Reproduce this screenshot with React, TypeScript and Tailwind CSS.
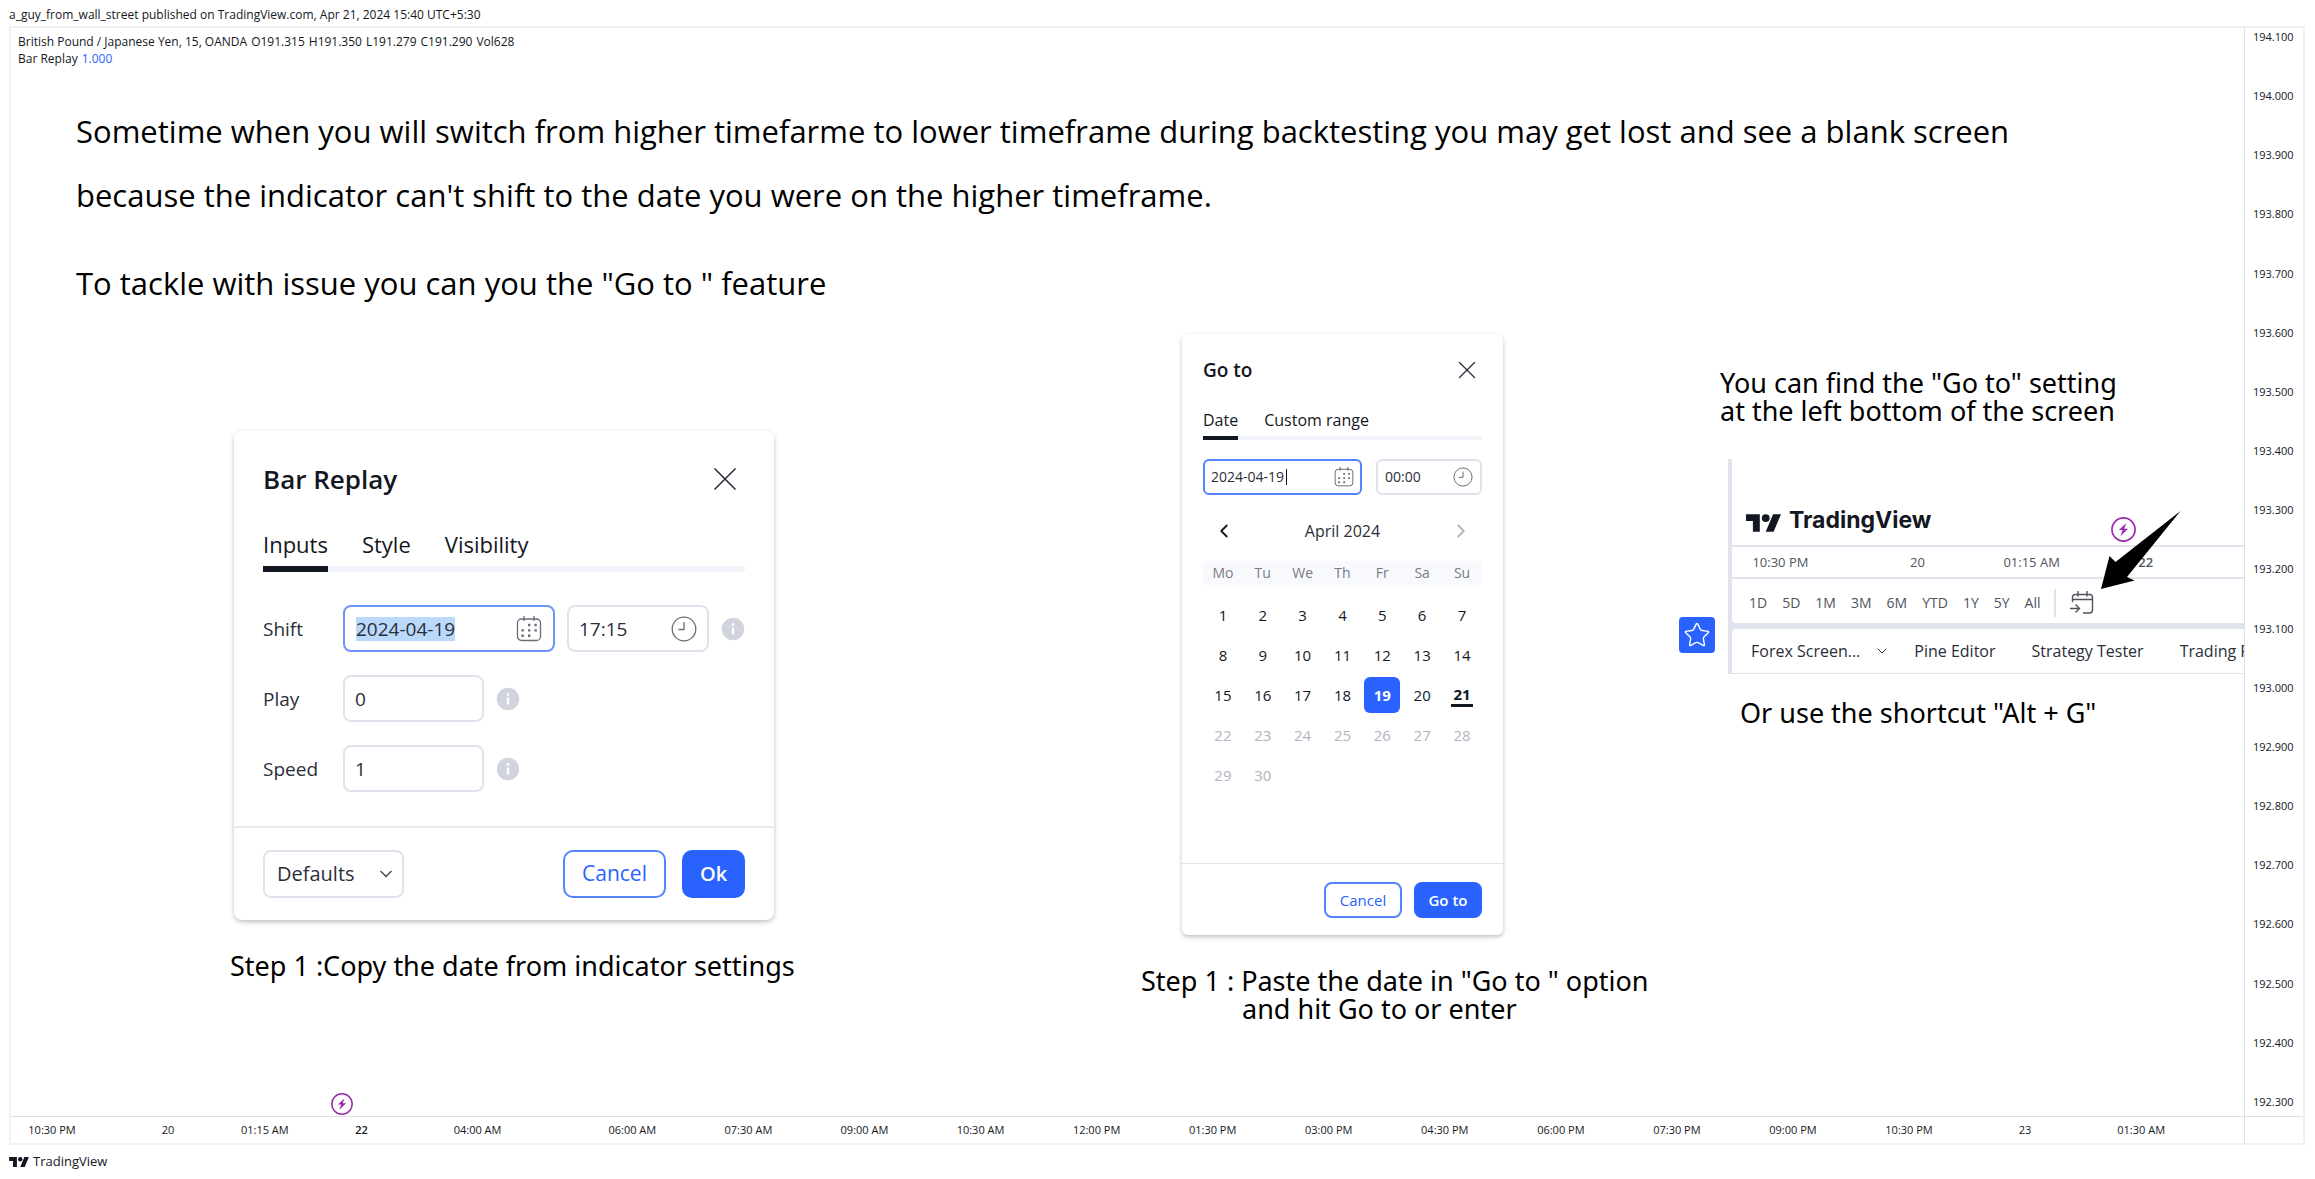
import React from "react";
import { ChevronDown, ChevronLeft, ChevronRight, Star, X } from "lucide-react";

const PRICES = [
  "194.100", "194.000", "193.900", "193.800", "193.700", "193.600", "193.500",
  "193.400", "193.300", "193.200", "193.100", "193.000", "192.900", "192.800",
  "192.700", "192.600", "192.500", "192.400", "192.300",
];

// bars = distance from the previous tick
type Tick = { label: string; bars: number; bold?: boolean };

const TICKS: Tick[] = [
  { label: "10:30 PM", bars: 2.12 },
  { label: "20", bars: 6 },
  { label: "01:15 AM", bars: 5 },
  { label: "22", bars: 5, bold: true },
  { label: "04:00 AM", bars: 6 },
  { label: "06:00 AM", bars: 8 },
  { label: "07:30 AM", bars: 6 },
  { label: "09:00 AM", bars: 6 },
  { label: "10:30 AM", bars: 6 },
  { label: "12:00 PM", bars: 6 },
  { label: "01:30 PM", bars: 6 },
  { label: "03:00 PM", bars: 6 },
  { label: "04:30 PM", bars: 6 },
  { label: "06:00 PM", bars: 6 },
  { label: "07:30 PM", bars: 6 },
  { label: "09:00 PM", bars: 6 },
  { label: "10:30 PM", bars: 6 },
  { label: "23", bars: 6 },
  { label: "01:30 AM", bars: 6 },
];

const MINI_TICKS: Tick[] = [
  { label: "10:30 PM", bars: 2.12 },
  { label: "20", bars: 6 },
  { label: "01:15 AM", bars: 5 },
  { label: "22", bars: 5, bold: true },
];

const WEEKDAYS = ["Mo", "Tu", "We", "Th", "Fr", "Sa", "Su"];
const WEEKS = [
  [1, 2, 3, 4, 5, 6, 7],
  [8, 9, 10, 11, 12, 13, 14],
  [15, 16, 17, 18, 19, 20, 21],
  [22, 23, 24, 25, 26, 27, 28],
  [29, 30],
];
const SELECTED = 19;
const TODAY = 21;

const RANGES = ["1D", "5D", "1M", "3M", "6M", "YTD", "1Y", "5Y", "All"];

const Gap = ({ bars }: { bars: number }) => <span className="basis-0" style={{ flexGrow: bars }} />;

const TimeTicks = ({ ticks, rest }: { ticks: Tick[]; rest: number }) => (
  <>
    {ticks.map((tick, i) => (
      <React.Fragment key={i}>
        <Gap bars={tick.bars} />
        <span className={`flex w-0 justify-center whitespace-nowrap ${tick.bold ? "font-semibold" : ""}`}>
          {tick.label}
        </span>
      </React.Fragment>
    ))}
    <Gap bars={rest} />
  </>
);

const LogoMark = ({ className }: { className: string }) => (
  <svg viewBox="0 4 35.5 18" className={className} fill="#131722" aria-hidden="true">
    <path d="M14 22H7V11H0V4h14v18ZM28 22h-8l7.5-18h8L28 22Z" />
    <circle cx="20" cy="8" r="4" />
  </svg>
);

const BoltIcon = ({ className }: { className: string }) => (
  <svg viewBox="0 0 21 21" className={className} aria-hidden="true">
    <circle cx="10.5" cy="10.5" r="9.7" fill="#fff" stroke="#9c27b0" strokeWidth="1.4" />
    <path d="M12.8 5.2 6.6 11h3.2l-1.9 4.9 6.5-6h-3.3Z" fill="#9c27b0" />
  </svg>
);

const CalendarIcon = ({ className }: { className: string }) => (
  <svg viewBox="0 0 26 26" className={className} fill="none" stroke="#6a6d78" strokeWidth="1.3" aria-hidden="true">
    <rect x="1.5" y="3" width="23" height="21.5" rx="4" />
    <path d="M8 0v5M18 0v5" />
    <path
      d="M12 9h2.4M18.4 9h2.4M5.4 14.4h2.4M12 14.4h2.4M18.4 14.4h2.4M5.4 19.8h2.4M12 19.8h2.4"
      strokeWidth="2.4"
    />
  </svg>
);

const ClockIcon = ({ className }: { className: string }) => (
  <svg viewBox="0 0 26 26" className={className} fill="none" stroke="#6a6d78" strokeWidth="1.3" aria-hidden="true">
    <circle cx="13" cy="13" r="11.8" />
    <path d="M13 6v7.5H7.5" />
  </svg>
);

const InfoIcon = () => (
  <svg viewBox="0 0 24 24" className="ml-3 size-6 shrink-0" aria-hidden="true">
    <circle cx="12" cy="12" r="11.2" fill="#d1d4dc" />
    <path d="M12 10.5v7M12 6.3v2.4" stroke="#fff" strokeWidth="2.4" />
  </svg>
);

const GoToIcon = () => (
  <svg viewBox="0 0 24 24" className="size-6" fill="none" stroke="#50535e" strokeWidth="1.4" aria-hidden="true">
    <path d="M2.5 11V6.5a3 3 0 0 1 3-3h14a3 3 0 0 1 3 3V19a3 3 0 0 1-3 3H13M2.5 8.5h20M8 0v5.5M17 0v5.5" />
    <path d="M0 17.5h9M5.5 13.5l4 4-4 4" />
  </svg>
);

const BarReplayDialog = () => (
  <section className="w-[540px] rounded-lg bg-white text-[#131722] shadow-[0_2px_5px_rgba(0,0,0,0.25)]">
    <div className="px-[29px] pt-6 pb-[34px]">
      <div className="flex h-12 items-center justify-between">
        <h2 className="text-[26px] font-semibold">Bar Replay</h2>
        <button type="button" aria-label="Close">
          <X className="size-10 text-[#2a2e39]" strokeWidth={1} />
        </button>
      </div>
      <div className="mt-[27px] flex gap-[34px] text-[22px] leading-7 font-medium">
        <button type="button" className="-mb-1.5 border-b-6 border-[#131722] pb-2">Inputs</button>
        <button type="button" className="pb-2">Style</button>
        <button type="button" className="pb-2">Visibility</button>
      </div>
      <div className="-z-10 h-1.5 rounded-full bg-[#f0f3fa]" />
      <div className="mt-[33px] flex flex-col gap-[23px] text-[19px] text-[#2a2e39]">
        <div className="flex items-center">
          <label htmlFor="shift" className="w-20">Shift</label>
          <div className="flex h-[47px] w-[212px] items-center justify-between rounded-lg border-2 border-[#6d93ff] px-[11px]">
            <input id="shift" readOnly value="2024-04-19" className="h-6 w-[99px] bg-[#bbd9fb] outline-none" />
            <CalendarIcon className="size-[26px]" />
          </div>
          <div className="ml-3 flex h-[47px] w-[142px] items-center justify-between rounded-lg border-2 border-[#e0e3eb] px-2.5">
            <input aria-label="Shift time" readOnly value="17:15" className="w-16 outline-none" />
            <ClockIcon className="size-[26px]" />
          </div>
          <InfoIcon />
        </div>
        <div className="flex items-center">
          <label htmlFor="play" className="w-20">Play</label>
          <input id="play" readOnly value="0" className="h-[47px] w-[141px] rounded-lg border-2 border-[#e0e3eb] px-2.5 outline-none" />
          <InfoIcon />
        </div>
        <div className="flex items-center">
          <label htmlFor="speed" className="w-20">Speed</label>
          <input id="speed" readOnly value="1" className="h-[47px] w-[141px] rounded-lg border-2 border-[#e0e3eb] px-2.5 outline-none" />
          <InfoIcon />
        </div>
      </div>
    </div>
    <div className="flex items-center border-t-2 border-[#e8eaf0] px-[29px] py-[22px] text-xl">
      <div className="relative">
        <select aria-label="Defaults" className="h-12 w-[141px] appearance-none rounded-lg border-2 border-[#e0e3eb] pl-3 text-[#2a2e39] outline-none">
          <option>Defaults</option>
        </select>
        <ChevronDown className="pointer-events-none absolute top-3.5 right-2 size-5 text-[#50535e]" strokeWidth={2} />
      </div>
      <button type="button" className="ml-auto h-12 w-[103px] rounded-[10px] border-2 border-[#5383ff] text-[21px] font-medium text-[#2962ff]">
        Cancel
      </button>
      <button type="button" className="ml-4 h-12 w-[63px] rounded-[10px] bg-[#2962ff] font-semibold text-white">Ok</button>
    </div>
  </section>
);

const dayClass = (day?: number) => {
  if (day === SELECTED) return "rounded-md bg-[#2962ff] font-bold text-white";
  if (day && day > TODAY) return "text-[#b2b5be]";
  return day === TODAY ? "font-bold" : "";
};

const GoToDialog = () => (
  <section className="w-[321px] rounded-md bg-white text-[15px] text-[#131722] shadow-[0_2px_4px_rgba(0,0,0,0.25)]">
    <div className="px-[21px] pt-4 pb-[68px]">
      <div className="flex h-10 items-center justify-between">
        <h2 className="text-[19px] font-semibold">Go to</h2>
        <button type="button" aria-label="Close">
          <X className="size-[30px] text-[#2a2e39]" strokeWidth={1} />
        </button>
      </div>
      <div className="mt-[18px] flex gap-[26px] text-base font-medium">
        <button type="button" className="-mb-1 border-b-4 border-[#131722] pb-1">Date</button>
        <button type="button" className="pb-1">Custom range</button>
      </div>
      <div className="-z-10 h-1 rounded-full bg-[#f0f3fa]" />
      <div className="mt-[19px] flex justify-between text-sm text-[#2a2e39]">
        <div className="flex h-9 w-[159px] items-center rounded-md border-2 border-[#5383ff] px-1.5">
          <input aria-label="Date" readOnly value="2024-04-19" className="w-[75px] outline-none" />
          <span className="h-4 w-px bg-[#131722]" />
          <CalendarIcon className="ml-auto size-5" />
        </div>
        <div className="flex h-9 w-[106px] items-center justify-between rounded-md border-2 border-[#e0e3eb] px-[7px]">
          <input aria-label="Time" readOnly value="00:00" className="w-12 outline-none" />
          <ClockIcon className="size-5" />
        </div>
      </div>
      <div className="mt-5 flex h-8 items-center justify-between px-2.5">
        <button type="button" aria-label="Previous month">
          <ChevronLeft className="size-[22px] text-[#131722]" strokeWidth={2} />
        </button>
        <span className="text-base text-[#2a2e39]">April 2024</span>
        <button type="button" aria-label="Next month">
          <ChevronRight className="size-[22px] text-[#b2b5be]" strokeWidth={2} />
        </button>
      </div>
      <table className="mt-3.5 w-full table-fixed text-center">
        <thead>
          <tr className="h-6 text-sm text-[#787b86]">
            {WEEKDAYS.map((name) => (
              <th key={name} className="bg-[#f8f9fd] p-0 font-normal first:rounded-l last:rounded-r">{name}</th>
            ))}
          </tr>
        </thead>
        <tbody>
          <tr className="h-2.5" />
          {WEEKS.map((week) => (
            <tr key={week[0]} className="h-10">
              {WEEKDAYS.map((name, i) => (
                <td key={name} className="p-0">
                  <span className={`mx-auto flex size-9 items-center justify-center ${dayClass(week[i])}`}>
                    {week[i] === TODAY ? (
                      <span className="border-b-3 border-[#131722] px-0.5 leading-5">{week[i]}</span>
                    ) : (
                      week[i]
                    )}
                  </span>
                </td>
              ))}
            </tr>
          ))}
        </tbody>
      </table>
    </div>
    <div className="flex justify-end gap-3 border-t border-[#e0e3eb] px-[21px] pt-[18px] pb-[17px]">
      <button type="button" className="h-9 w-[78px] rounded-lg border-2 border-[#5383ff] font-medium text-[#2962ff]">Cancel</button>
      <button type="button" className="h-9 w-[68px] rounded-lg bg-[#2962ff] font-semibold text-white">Go to</button>
    </div>
  </section>
);

const ScreenCorner = () => (
  <section className="relative ml-[13px] min-w-0 flex-1 overflow-hidden border-b border-[#e0e3eb] bg-[#e0e3eb] pl-1 whitespace-nowrap text-[#50535e]">
    <div className="flex h-[86px] items-end bg-white pb-[3px] pl-[14px]">
      <LogoMark className="mb-2.5 h-[18px] w-[35px]" />
      <span className="mb-2 ml-2 w-[142px] font-[Inter] text-[23px] leading-7 font-bold text-[#131722]">TradingView</span>
      <BoltIcon className="ml-[180px] size-[25px] shrink-0" />
    </div>
    <div className="mt-0.5 flex h-[30px] items-center bg-white text-[13px]">
      <TimeTicks ticks={MINI_TICKS} rest={4.3} />
    </div>
    <div className="mt-0.5 flex h-[44px] items-center rounded-bl bg-white pt-1 pl-[17px] text-sm">
      <div className="flex gap-[15px]">
        {RANGES.map((range) => (
          <button type="button" key={range}>{range}</button>
        ))}
      </div>
      <span className="ml-3.5 h-7 w-0.5 bg-[#e0e3eb]" />
      <button type="button" aria-label="Go to" className="ml-3.5"><GoToIcon /></button>
    </div>
    <div className="mt-1.5 flex h-[44px] items-center rounded-tl bg-white pl-[19px] text-base text-[#2a2e39]">
      <button type="button">Forex Screen...</button>
      <ChevronDown className="ml-3.5 size-4 shrink-0" strokeWidth={1.5} />
      <button type="button" className="ml-6">Pine Editor</button>
      <button type="button" className="ml-9">Strategy Tester</button>
      <button type="button" className="ml-9">Trading Panel</button>
    </div>
    <svg viewBox="0 0 80 78" className="absolute top-[52px] left-[373px] h-[78px] w-20" aria-hidden="true">
      <path d="M79.5 0 14.5 51 8.5 45 0 78l33.5-8.5-7.5-3.5Z" />
    </svg>
  </section>
);

const App = () => (
  <div className="flex min-h-screen flex-col bg-white pr-2.5 pl-[9px] font-['Open_Sans','Noto_Sans',sans-serif] text-[#131722]">
    <header className="flex h-[26px] items-center pt-1 text-xs">
      a_guy_from_wall_street published on TradingView.com, Apr 21, 2024 15:40 UTC+5:30
    </header>

    <div className="grid flex-1 grid-cols-[1fr_59px] grid-rows-[1fr_27px] border-2 border-[#f0f0f6]">
      <main className="flex min-w-0 flex-col">
        <div className="px-[7px] pt-[5px] text-xs leading-[17px]">
          <div className="flex gap-1">
            <span>British Pound / Japanese Yen, 15, OANDA</span>
            <span>O191.315</span>
            <span>H191.350</span>
            <span>L191.279</span>
            <span>C191.290</span>
            <span>Vol628</span>
          </div>
          <div className="flex gap-1">
            <span>Bar Replay</span>
            <span className="text-[#2962ff]">1.000</span>
          </div>
        </div>

        <div className="pt-8 pl-[65px] text-[31px] leading-[64px] text-black">
          <p>
            Sometime when you will switch from higher timefarme to lower timeframe during backtesting you may get lost and see a blank screen
            <br />
            because the indicator can't shift to the date you were on the higher timeframe.
          </p>
          <p className="mt-6">To tackle with issue you can you the "Go to " feature</p>
        </div>

        <div className="grid grid-cols-[911fr_538fr_565fr] pl-[219px] font-['Noto_Sans',sans-serif] text-[27px] leading-7 text-black">
          <div className="pt-[116px]">
            <div className="pl-1 font-['Open_Sans',sans-serif]">
              <BarReplayDialog />
            </div>
            <p className="mt-8">Step 1 :Copy the date from indicator settings</p>
          </div>
          <div className="pt-[19px]">
            <div className="pl-[41px] font-['Open_Sans',sans-serif]">
              <GoToDialog />
            </div>
            <p className="mt-8">Step 1 : Paste the date in "Go to " option</p>
            <p className="pl-[101px]">and hit Go to or enter</p>
          </div>
          <div className="min-w-0 pt-[54px]">
            <p className="pl-[41px]">
              You can find the "Go to" setting
              <br />
              at the left bottom of the screen
            </p>
            <div className="mt-[34px] flex items-start font-['Open_Sans',sans-serif]">
              <button type="button" aria-label="Favorite" className="mt-[158px] flex size-9 items-center justify-center rounded bg-[#2962ff]">
                <Star className="size-7 text-white" strokeWidth={1.2} />
              </button>
              <ScreenCorner />
            </div>
            <p className="mt-[25px] pl-[61px]">Or use the shortcut "Alt + G"</p>
          </div>
        </div>

        <div className="mt-auto flex pb-px">
          <Gap bars={17.1} />
          <span className="flex w-0 justify-center">
            <BoltIcon className="size-[22px] shrink-0" />
          </span>
          <Gap bars={98.3} />
        </div>
      </main>

      <div className="flex flex-col justify-between border-l border-[#e0e0e3] pt-[3px] pb-2 pl-2 text-[11px] leading-3">
        {PRICES.map((price) => (
          <span key={price}>{price}</span>
        ))}
      </div>
      <div className="flex items-center border-t border-[#e0e0e3] text-[11px]">
        <TimeTicks ticks={TICKS} rest={5.32} />
      </div>
      <div className="border-t border-l border-[#e0e0e3]" />
    </div>

    <footer className="flex h-[34px] items-center gap-1 text-[13px]">
      <LogoMark className="h-2.5 w-5" />
      TradingView
    </footer>
  </div>
);

export default App;
